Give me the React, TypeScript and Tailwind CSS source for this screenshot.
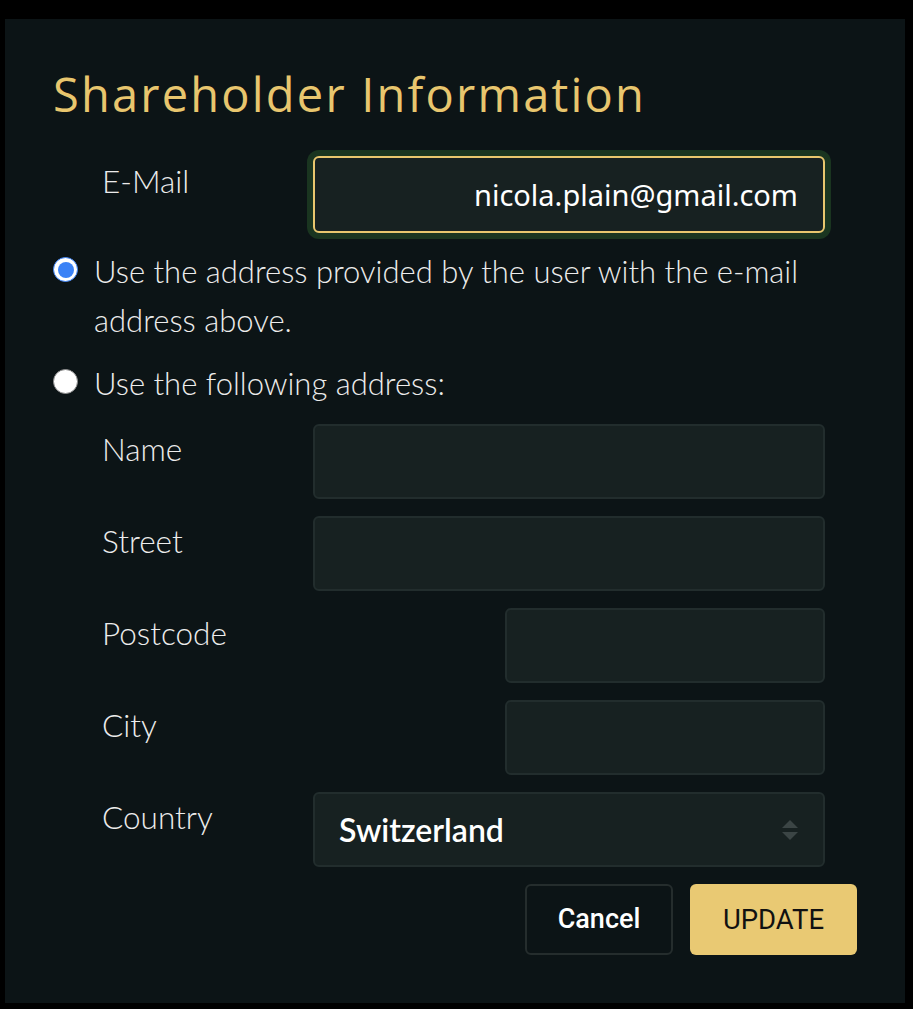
import { useState } from "react";

const labelCls =
  "w-[211px] shrink-0 text-[31.5px] leading-[50px] font-light text-[#ececec] font-['Lato',sans-serif]";
const fieldCls =
  "h-[75px] rounded-[6px] border-2 border-[#222d2d] bg-[#172121] px-[24px] text-[26px] text-white outline-none font-['Lato',sans-serif]";

const Radio = ({ checked }: { checked: boolean }) =>
  checked ? (
    <span className="mt-[10px] flex h-[25px] w-[25px] shrink-0 items-center justify-center rounded-full border-[1.5px] border-[#3b82f6] bg-white">
      <span className="h-[16px] w-[16px] rounded-full bg-[#3b82f6]" />
    </span>
  ) : (
    <span className="mt-[10px] h-[25px] w-[25px] shrink-0 rounded-full border border-[#8a8a8a] bg-white" />
  );

const Row = ({ label, children }: { label: string; children: React.ReactNode }) => (
  <div className="flex items-start pl-[49px] pr-[32px]">
    <div className={labelCls}>{label}</div>
    <div className="flex flex-1 justify-end">{children}</div>
  </div>
);

export default function App() {
  const [useOwn, setUseOwn] = useState(false);

  return (
    <div className="min-h-screen bg-black pl-[5px] pt-[19px]">
      <div className="flex h-[984px] w-[900px] flex-col bg-[#0c1416] px-[48px]">
        <h1 className="mt-[46px] text-[47px] leading-[58px] tracking-[2.2px] text-[#e8c66e] font-['Open_Sans',sans-serif]">
          Shareholder Information
        </h1>

        <div className="mt-[33px]">
          <Row label="E-Mail">
            <input
              readOnly
              value="nicola.plain@gmail.com"
              className="h-[77px] w-full rounded-[6px] border-2 border-[#e8c66e] bg-[#172121] px-[25px] text-right text-[29px] text-white outline-none ring-[6px] ring-[#1a3520] font-['Noto_Sans',sans-serif]"
            />
          </Row>
        </div>

        <div
          className="mt-[14px] flex cursor-pointer gap-[16px] text-[31px] leading-[49px] font-light text-[#ececec] font-['Lato',sans-serif]"
          onClick={() => setUseOwn(false)}
        >
          <Radio checked={!useOwn} />
          <span>Use the address provided by the user with the e-mail address above.</span>
        </div>

        <div
          className="mt-[14px] flex cursor-pointer gap-[16px] text-[31px] leading-[49px] font-light text-[#ececec] font-['Lato',sans-serif]"
          onClick={() => setUseOwn(true)}
        >
          <Radio checked={useOwn} />
          <span>Use the following address:</span>
        </div>

        <div className="mt-[16px] flex flex-col gap-[17px]">
          <Row label="Name">
            <input className={`${fieldCls} w-full`} />
          </Row>
          <Row label="Street">
            <input className={`${fieldCls} w-full`} />
          </Row>
          <Row label="Postcode">
            <input className={`${fieldCls} w-[320px]`} />
          </Row>
          <Row label="City">
            <input className={`${fieldCls} w-[320px]`} />
          </Row>
          <Row label="Country">
            <div className="relative flex h-[75px] w-full items-center rounded-[6px] border-2 border-[#222d2d] bg-[#172121] pl-[24px]">
              <span className="text-[32px] font-semibold text-white font-['Lato',sans-serif]">
                Switzerland
              </span>
              <svg
                className="absolute right-[25px] top-1/2 -translate-y-1/2"
                width="16"
                height="20"
                viewBox="0 0 16 20"
              >
                <path d="M8 0 L16 8 H0 Z" fill="#3b4545" />
                <path d="M0 12 H16 L8 20 Z" fill="#3b4545" />
              </svg>
            </div>
          </Row>
        </div>

        <div className="mt-[17px] flex justify-end gap-[17px]">
          <button className="h-[71px] w-[148px] rounded-[6px] border-2 border-[#252d2d] text-[27px] font-medium text-white font-['Roboto',sans-serif]">
            Cancel
          </button>
          <button className="h-[71px] w-[167px] rounded-[6px] bg-[#e9c973] text-[27.5px] text-[#111] font-['Roboto',sans-serif]">
            UPDATE
          </button>
        </div>
      </div>
    </div>
  );
}
